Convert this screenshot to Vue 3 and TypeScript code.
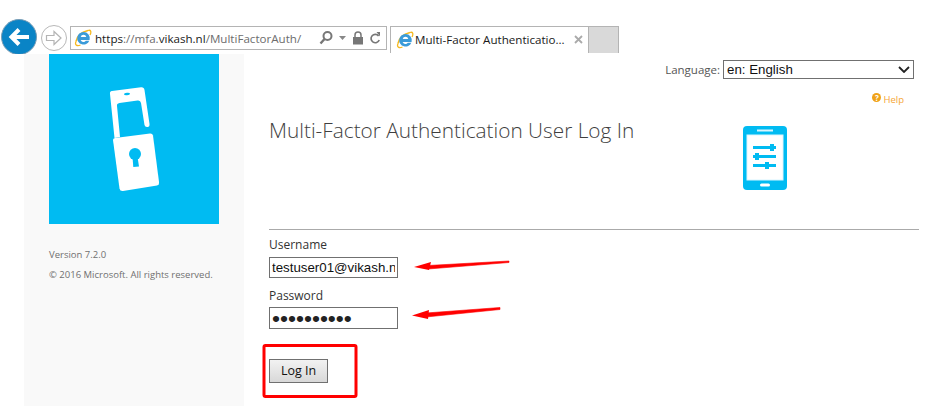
<script setup lang="ts">
const language = 'en: English'
</script>

<template>
  <div class="app">
    <header class="toolbar">
      <button class="back" aria-label="Back">
        <svg width="24" height="24" viewBox="0 0 24 24"><path d="M22 12H5M12 4.500L4.500 12L12 19.500" fill="none" stroke="#fff" stroke-width="4"/></svg>
      </button>
      <button class="forward" aria-label="Forward">
        <svg width="20" height="20" viewBox="0 0 20 20"><path d="M2.500 7.500H10V3.500L17 10L10 16.500V12.500H2.500Z" fill="#fff" stroke="#b4b4b4" stroke-width="1.200"/></svg>
      </button>
      <div class="address">
        <svg class="ie" width="18" height="18" viewBox="0 0 18 18">
          <path d="M2 12.500C3 7 8 3 14 1.500" fill="none" stroke="#f5b921" stroke-width="1.600"/>
          <path d="M9.500 3a6.300 6.300 0 1 0 5.800 8.800h-3.500a3 3 0 0 1-5.200-.8h9a6.300 6.300 0 0 0-6.100-8zM6.700 8a2.900 2.900 0 0 1 5.600 0z" fill="#3b9bd9" fill-rule="evenodd"/>
          <path d="M14 1.500C17 .5 17.500 3 16 6M2 12.500C.5 16 3 17.500 6.500 16" fill="none" stroke="#f5b921" stroke-width="1.300"/>
        </svg>
        <span class="url"><b>https</b><i>://mfa.</i><b>vikash.nl</b><i>/MultiFactorAuth/</i></span>
        <div class="tools">
          <svg width="16" height="16" viewBox="0 0 16 16"><circle cx="9.500" cy="6" r="4" fill="none" stroke="#777" stroke-width="2"/><path d="M6.500 9L2.500 13.500" stroke="#777" stroke-width="2.400"/></svg>
          <svg width="8" height="5" viewBox="0 0 8 5"><path d="M0 0H7L3.500 4Z" fill="#888"/></svg>
          <svg width="12" height="14" viewBox="0 0 12 14"><path d="M3 6V4a3 3 0 0 1 6 0v2" fill="none" stroke="#777" stroke-width="1.500"/><rect x="1" y="6" width="10" height="7.500" fill="#777"/></svg>
          <svg width="12" height="14" viewBox="0 0 12 14"><path d="M9.600 5A4.200 4.200 0 1 0 10.200 9" fill="none" stroke="#777" stroke-width="1.700"/><path d="M7.500 1H11V5.500Z" fill="#777"/></svg>
        </div>
      </div>
      <div class="tab">
        <svg class="ie" width="18" height="18" viewBox="0 0 18 18">
          <path d="M2 12.500C3 7 8 3 14 1.500" fill="none" stroke="#f5b921" stroke-width="1.600"/>
          <path d="M9.500 3a6.300 6.300 0 1 0 5.800 8.800h-3.500a3 3 0 0 1-5.200-.8h9a6.300 6.300 0 0 0-6.100-8zM6.700 8a2.900 2.900 0 0 1 5.600 0z" fill="#3b9bd9" fill-rule="evenodd"/>
          <path d="M14 1.500C17 .5 17.500 3 16 6M2 12.500C.5 16 3 17.500 6.500 16" fill="none" stroke="#f5b921" stroke-width="1.300"/>
        </svg>
        <span class="tab-title">Multi-Factor Authenticatio...</span>
        <svg class="close" width="9" height="9" viewBox="0 0 9 9"><path d="M1 1L8 8M8 1L1 8" stroke="#aaa" stroke-width="1.800"/></svg>
      </div>
      <div class="new-tab"></div>
    </header>

    <div class="page">
      <aside class="sidebar">
        <div class="logo">
          <svg width="170" height="170" viewBox="0 0 170 170">
            <path fill="#fff" d="M61 40Q60.500 37.300 63 37L92 33.300Q95 33 95.500 36L100.500 70Q100.800 73 98.500 73Q96 73.300 95.500 71L92 49Q91.500 46 88.500 46.500L70.500 49Q67.500 49.500 68 52L71 83L65.500 84Z"/>
            <ellipse cx="78" cy="40" rx="3" ry="1.300" fill="#00bbf2" transform="rotate(-6 78 40)"/>
            <path fill="#fff" d="M64 86Q64 84.500 66 84L101 79.500Q103.500 79.300 104 81.500L110 128Q110.300 131 108 131.500L74 137Q71 137.300 70.500 134.500Z"/>
            <circle cx="86" cy="100" r="6" fill="#00bbf2"/>
            <path fill="#00bbf2" d="M83.500 103H88.500L90 112.500L84.300 113Z"/>
          </svg>
        </div>
        <p class="version">Version 7.2.0</p>
        <p class="copyright">© 2016 Microsoft. All rights reserved.</p>
      </aside>

      <main class="main">
        <div class="language">
          <label for="lang">Language:</label>
          <span class="select-wrap">
            <select id="lang" class="lang-select"><option>{{ language }}</option></select>
            <svg class="chevron" width="12" height="7" viewBox="0 0 12 7"><path d="M1 1L6 6L11 1" fill="none" stroke="#222" stroke-width="1.800"/></svg>
          </span>
        </div>
        <div class="help">
          <span class="help-icon">?</span><span class="help-text">Help</span>
        </div>
        <div class="heading">
          <h1>Multi-Factor Authentication User Log In</h1>
          <svg class="device" width="44" height="64" viewBox="0 0 44 64">
            <rect width="44" height="64" rx="4" fill="#00bbf2"/>
            <rect x="3.500" y="8.500" width="37" height="46" fill="#d8f5fe"/>
            <rect x="4.500" y="9.500" width="35" height="44" fill="#fff"/>
            <rect x="14" y="3.500" width="16" height="2" fill="#d8f5fe"/>
            <rect x="17" y="57.500" width="10" height="3" rx="1.500" fill="#fff"/>
            <g fill="#00bbf2">
              <rect x="10" y="20" width="23" height="3"/>
              <rect x="27" y="18" width="4" height="7"/>
              <rect x="10" y="29" width="23" height="3"/>
              <rect x="12" y="27" width="4" height="7"/>
              <rect x="10" y="38" width="23" height="3"/>
              <rect x="22" y="36" width="4" height="7"/>
            </g>
          </svg>
        </div>
        <hr class="divider" />
        <label class="field-label" for="user">Username</label>
        <input id="user" class="field" type="text" value="testuser01@vikash.nl" />
        <label class="field-label second" for="pass">Password</label>
        <input id="pass" class="field pass" type="password" value="1234567890" />
        <button class="login">Log In</button>
      </main>
    </div>

    <svg class="annotations" width="927" height="406" viewBox="0 0 927 406">
      <path d="M428 265.500L509 261L509 262.500L428 269Z" fill="#f00" stroke="#f00" stroke-width=".6"/>
      <path d="M414 267L431 262L429 270Z" fill="#f00"/>
      <path d="M426 313L500 307.500L500 309.500L426 317Z" fill="#f00" stroke="#f00" stroke-width=".6"/>
      <path d="M412 315.500L429 310L428 319Z" fill="#f00"/>
      <rect x="264" y="345.500" width="92" height="51" rx="1.500" fill="none" stroke="#f00" stroke-width="3"/>
    </svg>
  </div>
</template>

<style scoped>
.app {
  position: relative;
  width: 927px;
  height: 406px;
  overflow: hidden;
  display: flex;
  flex-direction: column;
  background: #fff;
  font-family: "Open Sans", "Noto Sans", sans-serif;
}
.toolbar {
  height: 54px;
  flex: none;
  display: flex;
  align-items: flex-start;
  padding: 19px 0 0 1px;
  box-sizing: border-box;
  overflow: hidden;
}
.back {
  width: 36px;
  height: 36px;
  flex: none;
  border-radius: 50%;
  border: 1px solid #7a9db5;
  box-sizing: border-box;
  background: #0a84c6;
  padding: 0;
  display: flex;
  align-items: center;
  justify-content: center;
}
.forward {
  width: 26px;
  height: 26px;
  margin: 6px 0 0 4px;
  border-radius: 50%;
  border: 1px solid #b8b8b8;
  box-sizing: border-box;
  background: #fff;
  padding: 0;
  display: flex;
  align-items: center;
  justify-content: center;
}
.address {
  width: 317px;
  height: 24px;
  margin: 7px 0 0 3px;
  border: 1px solid #b4b4b4;
  box-sizing: border-box;
  display: flex;
  align-items: center;
  padding: 0 5px 0 3px;
}
.ie { flex: none; }
.url {
  margin-left: 3px;
  font-size: 11.600px;
  white-space: nowrap;
  color: #1a1a1a;
}
.url b { font-weight: 400; }
.url i { font-style: normal; color: #6d6d6d; }
.tools {
  margin-left: auto;
  display: flex;
  align-items: center;
  gap: 5px;
}
.tab {
  width: 199px;
  height: 27px;
  margin: 7px 0 0 3px;
  border: 1px solid #b4b4b4;
  border-bottom: none;
  box-sizing: border-box;
  display: flex;
  align-items: center;
  padding: 0 5px 1px 5px;
}
.tab-title {
  margin-left: 1px;
  font-size: 11.600px;
  color: #1a1a1a;
  white-space: nowrap;
}
.close { margin-left: auto; }
.new-tab {
  width: 30px;
  height: 27px;
  margin-top: 7px;
  background: #d9d9d9;
  border: 1px solid #b4b4b4;
  border-left: none;
  border-bottom: none;
  box-sizing: border-box;
}
.page {
  flex: 1;
  display: flex;
  padding-left: 24px;
  min-height: 0;
}
.sidebar {
  width: 220px;
  flex: none;
  background: #f9f9f9;
  padding: 0 25px;
  box-sizing: border-box;
}
.logo {
  width: 170px;
  height: 170px;
  background: #00bbf2;
}
.logo svg { display: block; }
.version, .copyright {
  margin: 0;
  font-size: 9.500px;
  line-height: 12px;
  color: #707070;
  white-space: nowrap;
}
.version { margin-top: 25px; }
.copyright { margin-top: 8px; }
.main {
  flex: 1;
  padding: 0 8px 0 25px;
  display: flex;
  flex-direction: column;
  align-items: flex-start;
  min-width: 0;
}
.language {
  align-self: flex-end;
  display: flex;
  align-items: center;
  gap: 3px;
  margin: 6px 5px 0 0;
  font-size: 11.500px;
  color: #555;
}
.select-wrap {
  position: relative;
  display: block;
  line-height: 0;
}
.lang-select {
  width: 191px;
  height: 19px;
  border: 1px solid #707070;
  background: #fff;
  appearance: none;
  font-family: "Liberation Sans", sans-serif;
  font-size: 13.300px;
  color: #111;
  padding: 0 0 0 3px;
  border-radius: 0;
}
.chevron {
  position: absolute;
  right: 4px;
  top: 6px;
  pointer-events: none;
}
.help {
  align-self: flex-end;
  display: flex;
  align-items: center;
  margin: 13px 15px 0 0;
  height: 14px;
}
.help-icon {
  width: 9px;
  height: 9px;
  border-radius: 50%;
  background: #f0a218;
  color: #fff;
  font-size: 8px;
  line-height: 9px;
  font-weight: 700;
  text-align: center;
  margin: -3px 2px 0 0;
}
.help-text {
  font-size: 9.500px;
  color: #f5a638;
}
.heading {
  align-self: stretch;
  display: flex;
  align-items: flex-start;
  height: 112px;
  margin-top: 11px;
}
h1 {
  margin: 0;
  font-size: 20.800px;
  line-height: 27px;
  font-weight: 300;
  color: #3f3f3f;
  white-space: nowrap;
  width: 474px;
  flex: none;
}
.device { margin-top: 9px; display: block; }
.divider {
  align-self: stretch;
  margin: 0;
  border: none;
  border-top: 1px solid #aaa;
  height: 0;
  flex: none;
}
.field-label {
  font-size: 12px;
  line-height: 16px;
  color: #333;
  margin-top: 7px;
}
.field-label.second { margin-top: 10px; }
.field {
  width: 129px;
  height: 21px;
  box-sizing: border-box;
  border: 1px solid #707070;
  padding: 0 2px;
  margin-top: 4px;
  font-family: "Liberation Sans", sans-serif;
  font-size: 13.300px;
  color: #111;
  background: #fff;
  outline: none;
}
.field.pass { margin-top: 3px; height: 22px; font-size: 22.800px; padding: 0 2px; color: #222; }
.login {
  width: 59px;
  height: 24px;
  margin-top: 30px;
  box-sizing: border-box;
  border: 1px solid #707070;
  border-radius: 0;
  background: linear-gradient(#f2f2f2, #d8d8d8);
  font-family: "Open Sans", sans-serif;
  font-size: 12.500px;
  color: #111;
  padding: 0 0 2px;
}
.annotations {
  position: absolute;
  left: 0;
  top: 0;
  pointer-events: none;
}
</style>
